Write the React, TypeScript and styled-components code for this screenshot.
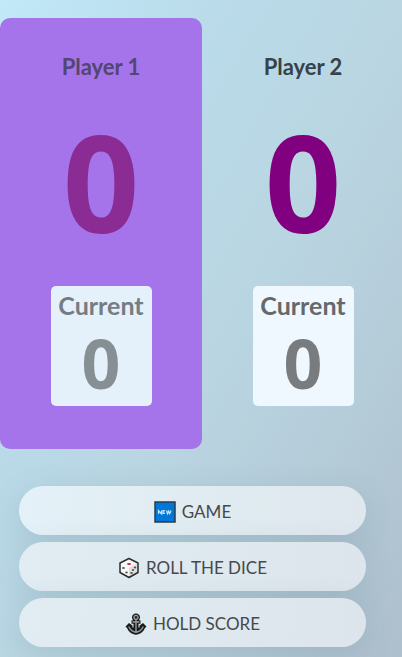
import React, { useState } from "react";
import styled, { createGlobalStyle } from "styled-components";

const GlobalStyle = createGlobalStyle`
  *, *::before, *::after { box-sizing: border-box; }
  body {
    margin: 0;
    min-height: 100vh;
    font-family: "Gill Sans", "Gill Sans MT", Lato, sans-serif;
    background: linear-gradient(120deg, #c1e9f8 0%, #badbea 28%, #b9d5e1 55%, #b5ccd9 75%, #aebfcd 100%) no-repeat;
  }
`;

const Page = styled.main`
  display: flex;
  flex-direction: column;
  gap: 37px;
  padding: 18px 0 9px;
  overflow-x: clip;
`;

const Players = styled.div`
  display: grid;
  grid-template-columns: 1fr 1fr;
  margin-right: -2px;
`;

const Player = styled.section<{ $active: boolean }>`
  display: flex;
  flex-direction: column;
  align-items: center;
  padding: 34px 0 43px;
  border-radius: 10px;
  color: ${(p) => (p.$active ? "#534670" : "#374249")};
  background: ${(p) => (p.$active ? "#a674ea" : "transparent")};
`;

const Name = styled.h2`
  margin: 0;
  font-size: 22px;
  line-height: 30px;
  font-weight: 700;
`;

const Score = styled.p<{ $active: boolean }>`
  margin: 22px 0 28px;
  font-family: "Noto Sans", sans-serif;
  font-size: 134px;
  line-height: 154px;
  font-weight: 700;
  color: ${(p) => (p.$active ? "#8b2c94" : "#800080")};
`;

const Current = styled.div<{ $active: boolean }>`
  display: flex;
  flex-direction: column;
  align-items: center;
  width: 50%;
  padding: 4px 0 0;
  border-radius: 5px;
  color: ${(p) => (p.$active ? "#747d83" : "#65686c")};
  background: ${(p) => (p.$active ? "#e4f1fb" : "#f0f8ff")};
`;

const CurrentLabel = styled.h3`
  margin: 0;
  font-size: 25px;
  line-height: 30px;
  font-weight: 700;
`;

const CurrentScore = styled.span<{ $active: boolean }>`
  font-family: "Noto Sans", sans-serif;
  font-size: 68px;
  line-height: 86px;
  font-weight: 700;
  color: ${(p) => (p.$active ? "#868f94" : "#787c7f")};
`;

const Actions = styled.div`
  display: flex;
  flex-direction: column;
  gap: 7px;
  margin: 0 36px 0 19px;
`;

const Action = styled.button`
  display: flex;
  align-items: center;
  justify-content: center;
  gap: 6px;
  height: 49px;
  padding: 2px 0 0;
  border: 0;
  border-radius: 25px;
  font-family: inherit;
  font-size: 17px;
  line-height: 24px;
  color: #46494c;
  background: linear-gradient(100deg, #e4f1f8, #e0ecf1 50%, #dfe7ee);
  box-shadow: 0 8px 32px rgba(65, 100, 115, 0.16);
  cursor: pointer;

  & + & {
    background: linear-gradient(100deg, #e1ecf3, #dce5eb);
  }
`;

const Icon = styled.svg`
  flex: none;
  width: 22px;
  height: 22px;
`;

const NewIcon = () => (
  <Icon viewBox="0 0 22 22" aria-hidden="true">
    <rect x="1" y="1" width="20" height="20" fill="#0078d7" stroke="#263d4d" strokeWidth="1.5" />
    <g fill="none" stroke="#c6e3fa" strokeWidth="1.2">
      <path d="M4.500 13V9.500L7.500 13V9.500M11 9.500H9V12.500H11M9 11H10.700M12.500 9.500L13.500 12.700L14.600 10L15.700 12.700L17 9.500" />
    </g>
  </Icon>
);

const DiceIcon = () => (
  <Icon viewBox="0 0 22 22" aria-hidden="true">
    <path d="M11 1.500L20 6V15.500L11 20.500L2 15.500V6Z" fill="#f7f7f7" />
    <path d="M11 11L20 6V15.500L11 20.500Z" fill="#dedede" />
    <path d="M11 1.500L20 6V15.500L11 20.500L2 15.500V6Z" fill="none" stroke="#2a2c2e" strokeWidth="1.5" strokeLinejoin="round" />
    <ellipse cx="11" cy="7" rx="2" ry="1.100" fill="#dc2035" />
    <g fill="#53575a">
      <ellipse cx="5.500" cy="11" rx="1.400" ry="0.900" />
      <ellipse cx="8.500" cy="15.500" rx="1.300" ry="1" />
      <ellipse cx="13.500" cy="16" rx="1.300" ry="0.900" />
      <ellipse cx="15" cy="13" rx="1.200" ry="0.900" />
      <ellipse cx="17" cy="10.500" rx="1.300" ry="0.900" />
    </g>
  </Icon>
);

const AnchorIcon = () => (
  <Icon viewBox="0 0 22 22" aria-hidden="true">
    <path
      d="M11 .5C13.500 .5 15 2.300 15 4.300C15 5.500 14.500 6.500 13.700 7.200H15.500V10.800H13.500V14.500H14.500V12.500L18 10L21.500 13.500L19.800 15.200C18.500 19 15 21.200 11 21.700C7 21.200 3.500 19 2.200 15.200L.5 13.500L4 10L7.500 12.500V14.500H8.500V10.800H6.500V7.200H8.300C7.500 6.500 7 5.500 7 4.300C7 2.300 8.500 .5 11 .5Z"
      fill="#191b1c"
    />
    <g fill="none" stroke="#9da1a3" strokeWidth="1.300" strokeLinecap="round">
      <circle cx="11" cy="4.300" r="2" />
      <path d="M11 7V19M8 9H14M4 14C5.300 17 8 18.700 11 19.300C14 18.700 16.700 17 18 14" />
    </g>
    <circle cx="11" cy="4.300" r="1.100" fill="#303436" />
  </Icon>
);

export default function App() {
  const [activePlayer] = useState(0);

  return (
    <>
      <GlobalStyle />
      <Page>
        <Players>
          {["Player 1", "Player 2"].map((name, index) => {
            const active = index === activePlayer;
            return (
              <Player key={name} $active={active}>
                <Name>{name}</Name>
                <Score $active={active}>0</Score>
                <Current $active={active}>
                  <CurrentLabel>Current</CurrentLabel>
                  <CurrentScore $active={active}>0</CurrentScore>
                </Current>
              </Player>
            );
          })}
        </Players>
        <Actions>
          <Action type="button"><NewIcon />GAME</Action>
          <Action type="button"><DiceIcon />ROLL THE DICE</Action>
          <Action type="button"><AnchorIcon />HOLD SCORE</Action>
        </Actions>
      </Page>
    </>
  );
}
